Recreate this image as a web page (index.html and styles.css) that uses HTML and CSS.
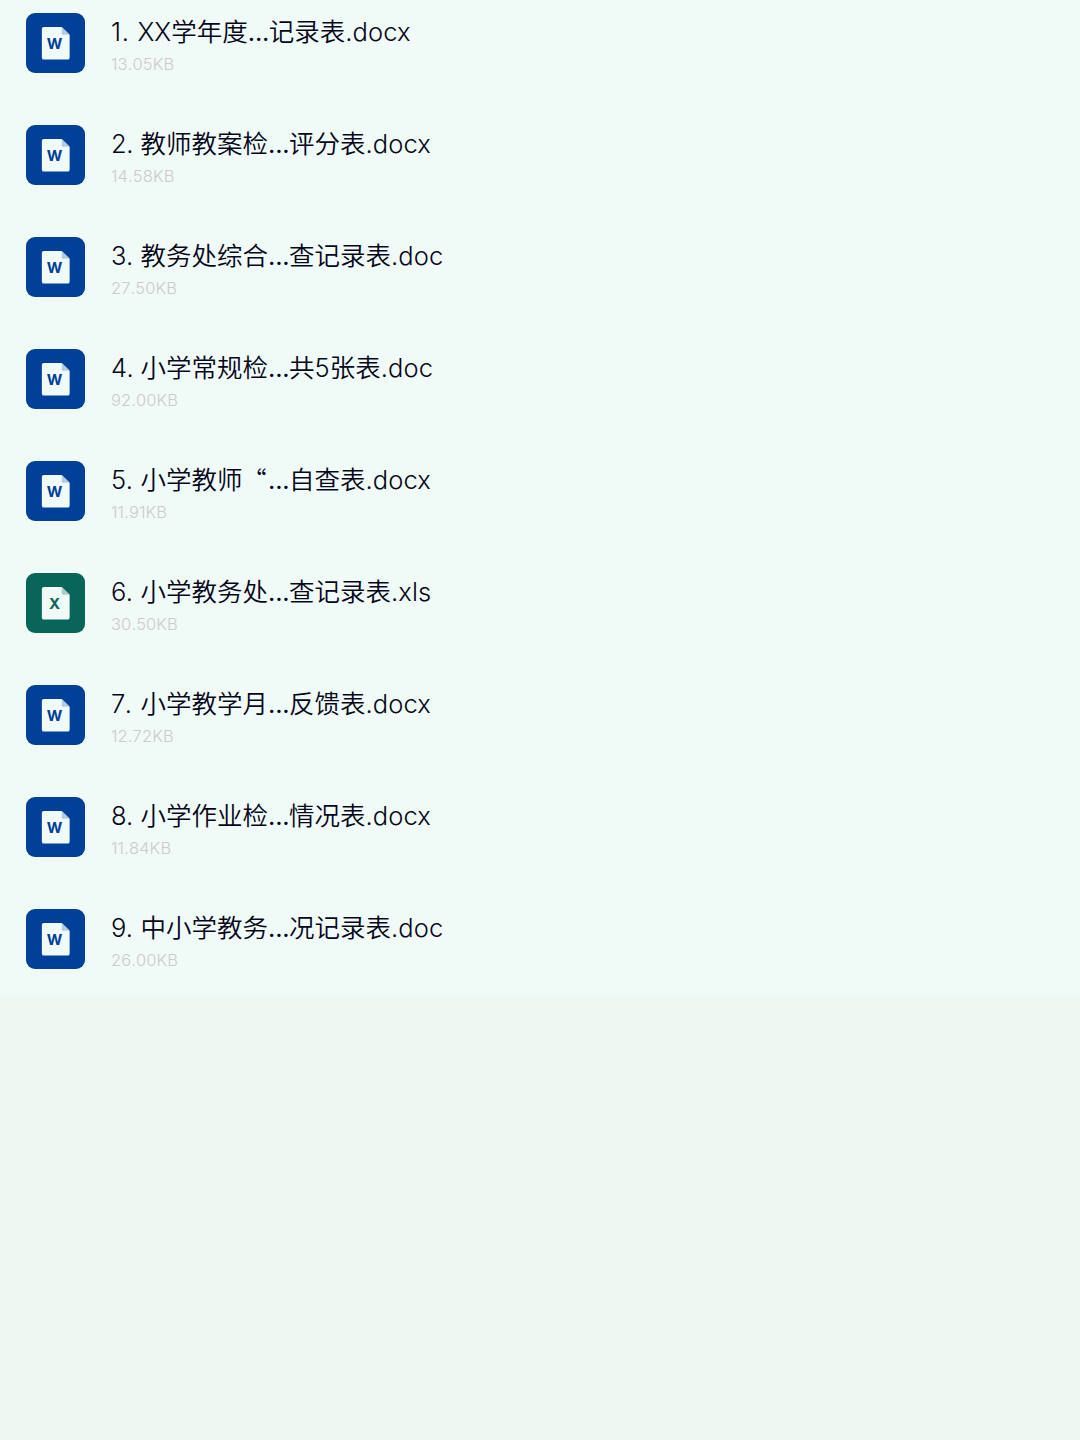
FILE: index.html
```html
<!DOCTYPE html>
<html lang="zh-CN">
<head>
    <meta charset="UTF-8">
    <meta name="viewport" content="width=device-width, initial-scale=1.0">
    <title>文件列表</title>
    <link rel="stylesheet" href="styles.css">
</head>
<body>

<svg class="defs" width="0" height="0">
    <symbol id="page" viewBox="0 0 60 60">
        <path fill="#f0fbf8" d="M18 14H36L44 22V45a2 2 0 0 1-2 2H18a2 2 0 0 1-2-2V16a2 2 0 0 1 2-2z"/>
        <path fill="currentColor" d="M36 14L44 22H37.500a1.500 1.500 0 0 1-1.500-1.500z"/>
    </symbol>
</svg>

<ul class="file-list">
    <li class="file">
        <div class="icon word"><svg><use href="#page"/></svg><b>W</b></div>
        <div class="info">
            <div class="name"><span class="num one">1.</span><span class="xx">XX</span>学年度<i>...</i>记录表<span class="ext">.docx</span></div>
            <div class="size">13.05KB</div>
        </div>
    </li>
    <li class="file">
        <div class="icon word"><svg><use href="#page"/></svg><b>W</b></div>
        <div class="info">
            <div class="name"><span class="num">2.</span>教师教案检<i>...</i>评分表<span class="ext">.docx</span></div>
            <div class="size">14.58KB</div>
        </div>
    </li>
    <li class="file">
        <div class="icon word"><svg><use href="#page"/></svg><b>W</b></div>
        <div class="info">
            <div class="name"><span class="num">3.</span>教务处综合<i>...</i>查记录表<span class="ext">.doc</span></div>
            <div class="size">27.50KB</div>
        </div>
    </li>
    <li class="file">
        <div class="icon word"><svg><use href="#page"/></svg><b>W</b></div>
        <div class="info">
            <div class="name"><span class="num">4.</span>小学常规检<i>...</i>共<span class="digit">5</span>张表<span class="ext">.doc</span></div>
            <div class="size">92.00KB</div>
        </div>
    </li>
    <li class="file">
        <div class="icon word"><svg><use href="#page"/></svg><b>W</b></div>
        <div class="info">
            <div class="name"><span class="num">5.</span>小学教师<span class="quote">“</span><i>...</i>自查表<span class="ext">.docx</span></div>
            <div class="size">11.91KB</div>
        </div>
    </li>
    <li class="file">
        <div class="icon excel"><svg><use href="#page"/></svg><b>X</b></div>
        <div class="info">
            <div class="name"><span class="num">6.</span>小学教务处<i>...</i>查记录表<span class="ext">.xls</span></div>
            <div class="size">30.50KB</div>
        </div>
    </li>
    <li class="file">
        <div class="icon word"><svg><use href="#page"/></svg><b>W</b></div>
        <div class="info">
            <div class="name"><span class="num">7.</span>小学教学月<i>...</i>反馈表<span class="ext">.docx</span></div>
            <div class="size">12.72KB</div>
        </div>
    </li>
    <li class="file">
        <div class="icon word"><svg><use href="#page"/></svg><b>W</b></div>
        <div class="info">
            <div class="name"><span class="num">8.</span>小学作业检<i>...</i>情况表<span class="ext">.docx</span></div>
            <div class="size">11.84KB</div>
        </div>
    </li>
    <li class="file">
        <div class="icon word"><svg><use href="#page"/></svg><b>W</b></div>
        <div class="info">
            <div class="name"><span class="num">9.</span>中小学教务<i>...</i>况记录表<span class="ext">.doc</span></div>
            <div class="size">26.00KB</div>
        </div>
    </li>
</ul>

</body>
</html>
```
FILE: styles.css
```css
* {
    box-sizing: border-box;
}
body {
    margin: 0;
    min-height: 1440px;
    background: #eef7f2;
    font-family: Inter, "Noto Sans CJK SC", sans-serif;
    font-weight: 300;
    color: #06061a;
}
.defs {
    display: block;
}
.file-list {
    list-style: none;
    margin: 0;
    padding: 0 25.5px;
    height: 996px;
    background: #f0faf6;
}
.file {
    display: flex;
    gap: 26px;
    height: 112px;
    padding-top: 13.4px;
}
.icon {
    position: relative;
    width: 59.5px;
    height: 59.5px;
    border-radius: 9px;
}
.icon svg {
    display: block;
    width: 59.5px;
    height: 59.5px;
}
.icon b {
    position: absolute;
    left: 0;
    top: 22px;
    width: 58px;
    text-align: center;
    font-size: 15px;
    font-weight: 700;
    line-height: 18px;
}
.word {
    background: #014099;
    color: #014099;
}
.excel {
    background: #09655a;
    color: #09655a;
}
.word svg {
    color: #b3cce3;
}
.excel svg {
    color: #a9cfc8;
}
.info {
    margin-top: -2.4px;
}
.name {
    height: 40px;
    line-height: 38px;
    font-size: 25.5px;
    font-family: "Noto Sans CJK SC", sans-serif;
    font-weight: 350;
    white-space: nowrap;
}
.name span, .name i {
    font-family: Inter, sans-serif;
    font-weight: 350;
    font-style: normal;
}
.num {
    display: inline-block;
    width: 29.5px;
    font-kerning: none;
    letter-spacing: -0.5px;
}
.num.one {
    width: 26.5px;
    letter-spacing: 0.8px;
}
.ext {
    letter-spacing: 0.1px;
}
.name .quote {
    display: inline-block;
    width: 25.5px;
    line-height: 20px;
    text-align: right;
    padding-right: 4px;
    font-family: "Noto Sans CJK SC", sans-serif;
    font-size: 24px;
}
.name i {
    display: inline-block;
    width: 21px;
    text-align: center;
    font-weight: 400;
    letter-spacing: -0.2px;
}
.size {
    line-height: 26px;
    font-size: 16.5px;
    font-kerning: none;
    letter-spacing: 0.1px;
    color: #cfcaca;
}
```
